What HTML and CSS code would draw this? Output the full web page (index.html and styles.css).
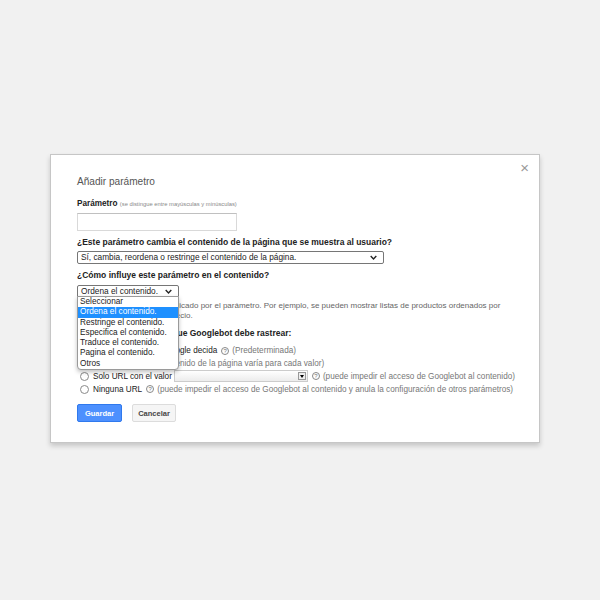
FILE: index.html
```html
<!DOCTYPE html>
<html lang="es">
<head>
<meta charset="utf-8">
<link rel="stylesheet" href="styles.css">
</head>
<body>
<div class="page">
  <div class="dialog">
    <div class="close">×</div>
    <h1 class="title">Añadir parámetro</h1>
    <div class="label"><b>Parámetro</b> <span class="hint">(se distingue entre mayúsculas y minúsculas)</span></div>
    <div class="textbox"></div>
    <div class="question">¿Este parámetro cambia el contenido de la página que se muestra al usuario?</div>
    <div class="select wide"><span>Sí, cambia, reordena o restringe el contenido de la página.</span><svg class="chev" viewBox="0 0 10 6" width="7" height="5"><path d="M1 1l4 4 4-4" fill="none" stroke="#222" stroke-width="2"/></svg></div>
    <div class="question q2">¿Cómo influye este parámetro en el contenido?</div>
    <div class="dropwrap">
      <div class="select narrow"><span>Ordena el contenido.</span><svg class="chev" viewBox="0 0 10 6" width="7" height="5"><path d="M1 1l4 4 4-4" fill="none" stroke="#222" stroke-width="2"/></svg></div>
      <ul class="listbox">
        <li>Seleccionar</li>
        <li class="sel">Ordena el contenido.</li>
        <li>Restringe el contenido.</li>
        <li>Especifica el contenido.</li>
        <li>Traduce el contenido.</li>
        <li>Pagina el contenido.</li>
        <li>Otros</li>
      </ul>
    </div>
    <p class="desc">Se reordena el contenido indicado por el parámetro. Por ejemplo, se pueden mostrar listas de productos ordenados por popularidad, valoración o precio.</p>
    <div class="question q3">Indica las URL del sitio que Googlebot debe rastrear:</div>
    <div class="radios">
      <label class="radio"><span class="dot"></span><span class="rl">Dejar que el propio Google decida</span><span class="help">?</span><span class="note">(Predeterminada)</span></label>
      <label class="radio"><span class="dot"></span><span class="rl">Todas las URL</span>&nbsp;<span class="note">(el contenido de la página varía para cada valor)</span></label>
      <label class="radio"><span class="dot"></span><span class="rl">Solo URL con el valor</span><span class="combo"><span class="arrow"></span></span><span class="help">?</span><span class="note">(puede impedir el acceso de Googlebot al contenido)</span></label>
      <label class="radio"><span class="dot"></span><span class="rl">Ninguna URL</span><span class="help">?</span><span class="note">(puede impedir el acceso de Googlebot al contenido y anula la configuración de otros parámetros)</span></label>
    </div>
    <div class="buttons">
      <button class="btn primary">Guardar</button>
      <button class="btn">Cancelar</button>
    </div>
  </div>
</div>
</body>
</html>
```
FILE: styles.css
```css
* { box-sizing: border-box; }
html, body { margin: 0; padding: 0; }
body {
  background: #f1f1f1;
  font-family: "Liberation Sans", Arial, sans-serif;
  color: #222;
  width: 600px;
  height: 600px;
  overflow: hidden;
}
.page { padding: 154px 0 0 50px; }
.dialog {
  position: relative;
  width: 490px;
  height: 289px;
  background: #fff;
  border: 1px solid #c6c6c6;
  box-shadow: 0 3px 5px rgba(0,0,0,0.18);
  padding: 20px 26px 0 26px;
}
.close {
  position: absolute;
  right: 10px;
  top: 4px;
  font-size: 15px;
  color: #999;
}
.title {
  margin: 0;
  font-size: 10.1px;
  font-weight: normal;
  color: #555;
  height: 14px;
  line-height: 14px;
}
.label {
  margin-top: 9px;
  font-size: 8.2px;
  line-height: 12px;
  height: 12px;
  color: #222;
}
.hint { font-size: 5.8px; color: #888; }
.textbox {
  margin-top: 3px;
  width: 160px;
  height: 18px;
  border: 1px solid #d9d9d9;
  border-top-color: #c0c0c0;
}
.question {
  margin-top: 5px;
  font-size: 8.5px;
  font-weight: bold;
  line-height: 12px;
  height: 12px;
  white-space: nowrap;
  color: #222;
}
.select {
  margin-top: 3px;
  height: 13px;
  border: 1px solid #767676;
  border-radius: 2px;
  font-size: 8.3px;
  line-height: 11px;
  padding: 0 6px 0 3px;
  display: flex;
  align-items: center;
  justify-content: space-between;
  white-space: nowrap;
  color: #222;
}
.select.wide { width: 307px; }
.select.narrow { width: 102px; margin-top: 4px; }
.q2 { margin-top: 5px; }
.dropwrap { position: relative; }
.listbox {
  position: absolute;
  left: 0;
  top: 11px;
  width: 102px;
  margin: 0;
  padding: 0;
  list-style: none;
  background: #fff;
  border: 1px solid #9a9a9a;
  border-radius: 0 0 4px 4px;
  box-shadow: 0 2px 4px rgba(0,0,0,0.25);
  z-index: 5;
  font-size: 8.25px;
  line-height: 10.3px;
}
.listbox li { padding: 0 2px; height: 10.3px; white-space: nowrap; color: #222; }
.listbox li.sel { background: #1e90ff; color: #fff; }
.desc {
  margin: 3px 0 0 0;
  font-size: 8px;
  line-height: 10px;
  color: #666;
  width: 436px;
}
.q3 { margin-top: 6px; }
.radios { margin-top: 5.6px; }
.radio {
  display: flex;
  align-items: center;
  height: 12.7px;
  font-size: 8.2px;
  white-space: nowrap;
  color: #222;
  padding-left: 3px;
}
.dot {
  width: 9px;
  height: 9px;
  border: 1px solid #8a8a8a;
  border-radius: 50%;
  margin-right: 4px;
  flex: none;
}
.rl { color: #222; }
.help {
  display: inline-block;
  width: 8px;
  height: 8px;
  border: 1px solid #888;
  border-radius: 50%;
  font-size: 6px;
  line-height: 7px;
  text-align: center;
  color: #777;
  margin: 0 3px 0 4px;
  flex: none;
}
.note { color: #777; }
.combo {
  position: relative;
  width: 134px;
  height: 12px;
  border: 1px solid #ccc;
  background: linear-gradient(#fff, #ececec);
  margin-left: 2px;
  flex: none;
}
.arrow {
  position: absolute;
  right: 1px;
  top: 1px;
  width: 8px;
  height: 8px;
  background: #eee;
  border: 1px solid #999;
}
.arrow::after {
  content: "";
  position: absolute;
  left: 1px;
  top: 2px;
  border-left: 2.5px solid transparent;
  border-right: 2.5px solid transparent;
  border-top: 3px solid #000;
}
.buttons {
  margin-top: 9px;
  display: flex;
  gap: 10px;
}
.btn {
  height: 18px;
  width: 44px;
  padding: 0;
  font-family: "Liberation Sans", Arial, sans-serif;
  font-size: 7.5px;
  font-weight: bold;
  border-radius: 2px;
  border: 1px solid #dcdcdc;
  background: #f5f5f5;
  color: #444;
}
.btn.primary {
  width: 45px;
  background: #4d90fe;
  border-color: #3079ed;
  color: #fff;
}
```
